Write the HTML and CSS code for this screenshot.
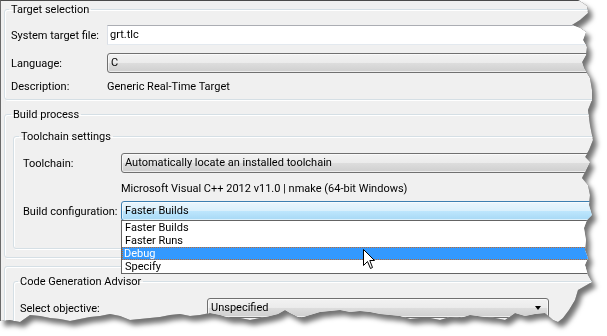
FILE: index.html
```html
<!DOCTYPE html>
<html>
<head>
    <meta charset="utf-8">
    <title>Target selection</title>
    <link rel="stylesheet" href="styles.css">
</head>
<body>
<div class="shot">
    <div class="paper">
        <fieldset class="grp g-target">
            <legend>Target selection</legend>
            <div class="row">
                <label>System target file:</label>
                <div class="u-edit">grt.tlc</div>
            </div>
            <div class="row">
                <label>Language:</label>
                <div class="u-combo">C</div>
            </div>
            <div class="row row-text">
                <label>Description:</label>
                <span>Generic Real-Time Target</span>
            </div>
        </fieldset>

        <fieldset class="grp g-build">
            <legend>Build process</legend>
            <fieldset class="grp sub g-tool">
                <legend>Toolchain settings</legend>
                <div class="row">
                    <label>Toolchain:</label>
                    <div class="u-combo">Automatically locate an installed toolchain</div>
                </div>
                <div class="info">Microsoft Visual C++ 2012 v11.0 | nmake (64-bit Windows)</div>
                <div class="row">
                    <label>Build configuration:</label>
                    <div class="drop">
                        <div class="u-combo hot">Faster Builds</div>
                        <!-- opened list of the combo -->
                        <ul class="m-list">
                            <li>Faster Builds</li>
                            <li>Faster Runs</li>
                            <li class="sel">Debug</li>
                            <li>Specify</li>
                        </ul>
                    </div>
                </div>
            </fieldset>
        </fieldset>

        <fieldset class="grp g-code">
            <fieldset class="grp sub g-cga">
                <legend>Code Generation Advisor</legend>
                <div class="row">
                    <label>Select objective:</label>
                    <div class="u-combo arrow">Unspecified</div>
                </div>
            </fieldset>
        </fieldset>
    </div>

    <svg class="cursor" width="13" height="21" viewBox="0 0 13 21">
        <path d="M0.5 0.5 L0.5 16.5 L4.5 12.5 L7.5 19.5 L9.5 18.5 L6.8 11.5 L11.5 11.5 Z" fill="#fff" stroke="#000" stroke-width="1"/>
    </svg>
</div>
</body>
</html>
```
FILE: styles.css
```css
html, body{
    margin: 0;
    padding: 0;
}
body{
    background: #fff;
    font: 11px Roboto, "Liberation Sans", sans-serif;
    color: #000;
}
/* torn paper: shadow on the wrapper, jagged clip on the paper */
.shot{
    position: relative;
    width: 607px; height: 336px;
    filter: drop-shadow(0 0 0.6px #333) drop-shadow(4px 5px 2.5px rgba(0, 0, 0, 0.55));
}
.paper{
    width: 600px; height: 334px;
    box-sizing: border-box;
    padding: 0 0 0 3px;
    background: #f0f0f0;
    border-top: 1px solid #4a4a4a;
    border-left: 1px solid #6a6a6a;
    overflow: hidden;
    clip-path: polygon(0 0, 578px 0, 583px 3px, 587px 6px, 588px 13px, 580px 20px, 572px 25px, 580px 28px, 586px 32px,
        583px 40px, 587px 47px, 586px 55px, 582px 62px, 584px 68px, 590px 78px, 592px 90px, 592px 100px, 588px 110px,
        590px 125px, 593px 140px, 589px 150px, 585px 157px, 590px 162px, 586px 170px, 582px 178px, 588px 185px,
        590px 195px, 589px 205px, 592px 215px, 587px 220px, 584px 228px, 586px 240px, 585px 250px, 588px 258px,
        585px 265px, 588px 275px, 592px 282px, 578px 290px, 575px 300px, 569px 310px, 563px 318px, 558px 322px,
        553px 320px, 545px 313px, 535px 314px, 525px 316px, 515px 313px, 505px 320px, 495px 318px, 485px 317px,
        470px 315px, 460px 318px, 450px 317px, 440px 320px, 430px 318px, 420px 318px, 410px 319px, 400px 316px,
        390px 315px, 380px 314px, 370px 312px, 360px 311px, 350px 312px, 340px 310px, 330px 311px, 320px 312px,
        310px 315px, 300px 318px, 290px 313px, 285px 310px, 278px 314px, 270px 316px, 260px 318px, 250px 320px,
        240px 318px, 230px 318px, 220px 315px, 210px 313px, 200px 315px, 190px 316px, 180px 314px, 170px 315px,
        160px 317px, 150px 318px, 140px 319px, 130px 320px, 120px 316px, 110px 314px, 100px 316px, 90px 317px,
        80px 319px, 70px 321px, 60px 319px, 50px 318px, 40px 316px, 30px 315px, 20px 322px, 10px 320px, 0 321px);
}

/* group boxes */
.grp{
    margin: 0;
    padding: 0;
    min-width: 0;
    border: 1px solid #d5dfe5;
    border-radius: 3px;
    box-shadow: inset 1px 1px 0 #fff, 1px 1px 0 #fff;
}
.grp legend{
    padding: 0 2px;
    margin-left: -2px;
    line-height: 13px;
}
.g-target{ margin-top: 2px; padding: 9px 0 6px 6px; }
.g-build{ margin-top: 8px; padding: 9px 0 8px 8px; }
.g-code{ margin-top: 8px; padding: 8px 0 10px 8px; }
.g-tool{ padding: 10px 0 27px 9px; }
.g-tool legend{ margin-left: -4px; }
.g-cga{ padding: 10px 0 12px 6px; }

.row{
    display: flex;
    align-items: center;
    height: 20px;
    margin-bottom: 8px;
}
.row label{ flex: none; }
.row > :last-child{ flex: 1; }
.g-target .row label{ width: 96px; }
.g-target .row-text{ height: 13px; margin: -1px 0 0; }
.g-tool .row label{ width: 98px; }
.g-tool .row{ margin-bottom: 0; }
.g-cga .row{ margin-bottom: 0; }
.g-cga .row label{ width: 187px; }

.info{
    padding-left: 98px;
    margin: 9px 0 6px;
    line-height: 13px;
}

/* controls */
.u-edit, .u-combo{
    box-sizing: border-box;
    height: 20px;
    line-height: 18px;
    white-space: nowrap;
}
.u-edit{
    padding: 0 2px;
    background: #fff;
    border: 1px solid;
    border-color: #abadb3 #e2e3ea #e3e9ef #dbdfe6;
}
.u-combo{
    padding: 0 3px;
    border: 1px solid #707070;
    border-radius: 3px;
    background: linear-gradient(#f2f2f2, #ebebeb 50%, #dddddd 50%, #cfcfcf);
    box-shadow: inset 0 0 0 1px rgba(255, 255, 255, 0.6);
}
.u-combo.hot{
    border-color: #3c7fb1;
    background: linear-gradient(#eaf6fd, #d9f0fc 50%, #bee6fd 50%, #a7d9f5);
}
.g-cga .u-combo{ flex: none; width: 342px; }
.u-combo.arrow{
    display: flex;
    justify-content: space-between;
    align-items: center;
}
.u-combo.arrow::after{
    content: "";
    margin-right: 4px;
    border: 3.5px solid transparent;
    border-top: 4px solid #000;
    border-bottom: 0;
}

/* opened drop-down list */
.drop{
    position: relative;
    height: 20px;
}
.m-list{
    position: absolute;
    z-index: 2;
    left: 0; right: 0; top: 19px;
    margin: 0; padding: 0;
    list-style: none;
    background: #fff;
    border: 1px solid #646464;
}
.m-list li{
    height: 13px;
    line-height: 13px;
    padding-left: 3px;
}
.m-list .sel{
    box-sizing: border-box;
    background: #3399ff;
    color: #fff;
    outline: 1px dotted #c46a28;
    outline-offset: -1px;
    padding-left: 2px;
}

.cursor{
    position: absolute;
    left: 363px; top: 249px;
    z-index: 3;
}
```
